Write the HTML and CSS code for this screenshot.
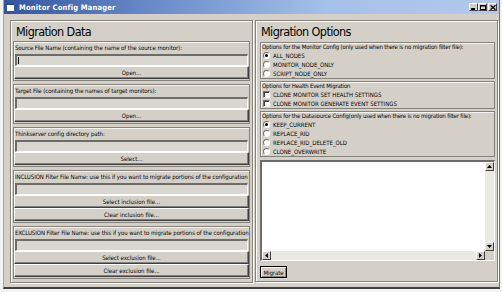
FILE: index.html
```html
<!DOCTYPE html>
<html>
<head>
<meta charset="utf-8">
<link rel="stylesheet" href="styles.css">
</head>
<body>
<div class="window">
  <div class="titlebar">
    <span class="app-icon"></span>
    <span class="title">Monitor Config Manager</span>
    <div class="caption-btns">
      <span class="cbtn"><svg width="6" height="5" viewBox="0 0 6 5"><rect x="0" y="3" width="4" height="2" fill="#000"/></svg></span>
      <span class="cbtn"><svg width="6" height="5" viewBox="0 0 6 5"><rect x="0.5" y="0.5" width="5" height="4" fill="none" stroke="#000"/><rect x="0" y="0" width="6" height="1.5" fill="#000"/></svg></span>
      <span class="cbtn close"><svg width="6" height="5" viewBox="0 0 6 5"><path d="M0.5 0.3 L5.5 4.7 M5.5 0.3 L0.5 4.7" stroke="#000" stroke-width="1.3"/></svg></span>
    </div>
  </div>
  <div class="client">
    <section class="panel panel-left">
      <h1 class="heading">Migration Data</h1>
      <div class="groups">
        <div class="group">
          <div class="label">Source File Name (containing the name of the source monitor):</div>
          <div class="field"><span class="caret"></span></div>
          <div class="btn">Open...</div>
        </div>
        <div class="group">
          <div class="label">Target File (containing the names of target monitors):</div>
          <div class="field"></div>
          <div class="btn">Open...</div>
        </div>
        <div class="group">
          <div class="label">Thinkserver config directory path:</div>
          <div class="field"></div>
          <div class="btn">Select...</div>
        </div>
        <div class="group">
          <div class="label">INCLUSION Filter File Name: use this if you want to migrate portions of the configuration</div>
          <div class="field"></div>
          <div class="btn">Select inclusion file...</div>
          <div class="btn">Clear inclusion file...</div>
        </div>
        <div class="group">
          <div class="label">EXCLUSION Filter File Name: use this if you want to migrate portions of the configuration</div>
          <div class="field"></div>
          <div class="btn">Select exclusion file...</div>
          <div class="btn">Clear exclusion file...</div>
        </div>
      </div>
    </section>
    <section class="panel panel-right">
      <h1 class="heading">Migration Options</h1>
      <div class="opt-groups">
        <div class="group opt-group">
          <div class="opt-label">Options for the Monitor Config (only used when there is no migration filter file):</div>
          <div class="opt"><span class="radio checked"></span>ALL_NODES</div>
          <div class="opt"><span class="radio"></span>MONITOR_NODE_ONLY</div>
          <div class="opt"><span class="radio"></span>SCRIPT_NODE_ONLY</div>
        </div>
        <div class="group opt-group">
          <div class="opt-label">Options for Health Event Migration</div>
          <div class="opt"><span class="check"></span>CLONE MONITOR SET HEALTH SETTINGS</div>
          <div class="opt"><span class="check"></span>CLONE MONITOR GENERATE EVENT SETTINGS</div>
        </div>
        <div class="group opt-group">
          <div class="opt-label">Options for the Datasource Config(only used when there is no migration filter file):</div>
          <div class="opt"><span class="radio checked"></span>KEEP_CURRENT</div>
          <div class="opt"><span class="radio"></span>REPLACE_RID</div>
          <div class="opt"><span class="radio"></span>REPLACE_RID_DELETE_OLD</div>
          <div class="opt"><span class="radio"></span>CLONE_OVERWRITE</div>
        </div>
      </div>
      <div class="log">
        <div class="log-text"></div>
        <div class="vscroll">
          <span class="sbtn"><svg width="5" height="3" viewBox="0 0 5 3"><path d="M2.5 0 L5 3 L0 3 Z" fill="#000"/></svg></span>
          <span class="track"></span>
          <span class="sbtn"><svg width="5" height="3" viewBox="0 0 5 3"><path d="M0 0 L5 0 L2.5 3 Z" fill="#000"/></svg></span>
        </div>
        <div class="hscroll">
          <span class="sbtn"><svg width="3" height="5" viewBox="0 0 3 5"><path d="M0 2.5 L3 0 L3 5 Z" fill="#000"/></svg></span>
          <span class="track"></span>
          <span class="sbtn"><svg width="3" height="5" viewBox="0 0 3 5"><path d="M3 2.5 L0 0 L0 5 Z" fill="#000"/></svg></span>
        </div>
        <div class="corner"></div>
      </div>
      <div class="actions">
        <span class="btn migrate">Migrate</span>
      </div>
    </section>
  </div>
</div>
</body>
</html>
```
FILE: styles.css
```css
html, body {
  margin: 0;
  padding: 0;
}
body {
  width: 502px;
  height: 292px;
  overflow: hidden;
  background: #f3f3f3;
  font-family: "DejaVu Sans Condensed", "Liberation Sans", sans-serif;
  font-size: 6px;
  color: #000;
}
.window {
  box-sizing: border-box;
  margin-left: 3px;
  width: 497px;
  height: 289px;
  border-left: 1px solid #8ea7d4;
  border-right: 1px solid #707070;
  border-bottom: 2px solid #404040;
  background: #d4d0c8;
  display: flex;
  flex-direction: column;
}
.titlebar {
  height: 14px;
  flex: none;
  display: flex;
  align-items: center;
  padding: 0 2px 0 2px;
  background: linear-gradient(90deg, #33559f 0%, #6a8bc9 30%, #a5c0e9 65%, #b2c9ec 100%);
  color: #fff;
}
.app-icon {
  width: 7px;
  height: 6px;
  background: #fff;
  border-top: 2px solid #2b4d9a;
  box-sizing: content-box;
  margin-left: 1px;
}
.title {
  margin-left: 5px;
  font-weight: bold;
  font-size: 7.5px;
  letter-spacing: 0.2px;
}
.caption-btns {
  margin-left: auto;
  display: flex;
  align-items: center;
}
.cbtn {
  box-sizing: border-box;
  width: 9px;
  height: 8px;
  background: #d4d0c8;
  border: 1px solid;
  border-color: #fff #404040 #404040 #fff;
  display: flex;
  align-items: center;
  justify-content: center;
}
.cbtn.close {
  margin-left: 1px;
}
.client {
  flex: 1;
  display: flex;
  gap: 2px;
  padding: 6px 0 0 6px;
}
.panel {
  box-sizing: border-box;
  width: 243px;
  border: 1px solid #85827c;
  box-shadow: inset 1px 1px 0 #fff, 1px 1px 0 #fff;
  display: flex;
  flex-direction: column;
}
.panel-left {
  height: 263px;
  padding: 0 2px 2px 2px;
}
.panel-right {
  height: 262px;
  padding: 0 2px 0 4px;
}
.heading {
  margin: 0;
  height: 20px;
  box-sizing: border-box;
  padding: 1px 0 0 3px;
  font-size: 12.5px;
  line-height: 19px;
  font-weight: normal;
  letter-spacing: -0.6px;
}
.panel-right .heading {
  padding-left: 1px;
  height: 21px;
}
.groups {
  display: flex;
  flex-direction: column;
  gap: 3px;
}
.group {
  border: 1px solid #85827c;
  box-shadow: inset 1px 1px 0 #f4f3f0;
  display: flex;
  flex-direction: column;
  padding-bottom: 1px;
}
.label {
  height: 12px;
  line-height: 12px;
  padding-left: 1px;
  white-space: nowrap;
  letter-spacing: -0.06px;
}
.field {
  box-sizing: border-box;
  height: 12px;
  margin: 0 1px;
  background: #dad7d0;
  border-style: solid;
  border-width: 2px 1px 1px 2px;
  border-color: #6e6c68 #fff #fff #6e6c68;
  display: flex;
  align-items: center;
}
.caret {
  width: 1px;
  height: 7px;
  background: #000;
  margin-left: 1px;
}
.btn {
  box-sizing: border-box;
  height: 13px;
  background: #d4d0c8;
  border: 1px solid;
  border-color: #fff #404040 #404040 #fff;
  box-shadow: inset -1px -1px 0 #808080;
  display: flex;
  align-items: center;
  justify-content: center;
  white-space: nowrap;
}
.opt-groups {
  display: flex;
  flex-direction: column;
  gap: 2px;
}
.opt-group {
  padding-bottom: 0;
}
.opt-label {
  height: 8px;
  line-height: 8px;
  padding-left: 1px;
  white-space: nowrap;
  letter-spacing: -0.16px;
}
.opt {
  height: 9px;
  display: flex;
  align-items: center;
  gap: 3px;
  padding-left: 2px;
  white-space: nowrap;
}
.radio {
  box-sizing: border-box;
  width: 7px;
  height: 7px;
  border-radius: 50%;
  border: 1px solid;
  border-color: #707070 #fff #fff #707070;
  background: #fff;
  display: flex;
  align-items: center;
  justify-content: center;
}
.radio.checked::after {
  content: "";
  width: 3px;
  height: 3px;
  border-radius: 50%;
  background: #000;
}
.check {
  box-sizing: border-box;
  width: 7px;
  height: 7px;
  border: 1px solid;
  border-color: #707070 #fff #fff #707070;
  box-shadow: inset 1px 1px 0 #404040;
  background: #fff;
}
.log {
  margin-top: 3px;
  height: 101px;
  box-sizing: border-box;
  border-style: solid;
  border-width: 2px 1px 1px 2px;
  border-color: #6e6c68 #fff #fff #6e6c68;
  background: #fff;
  display: grid;
  grid-template-columns: 1fr 9px;
  grid-template-rows: 1fr 9px;
}
.vscroll {
  display: flex;
  flex-direction: column;
}
.hscroll {
  display: flex;
}
.track {
  flex: 1;
  background: #ebe9e4;
}
.sbtn {
  box-sizing: border-box;
  width: 9px;
  height: 9px;
  flex: none;
  background: #d4d0c8;
  border: 1px solid;
  border-color: #fff #404040 #404040 #fff;
  display: flex;
  align-items: center;
  justify-content: center;
}
.corner {
  background: #d4d0c8;
}
.actions {
  margin-top: 5px;
  display: flex;
}
.btn.migrate {
  width: 27px;
  height: 12px;
  border: 1px solid #000;
  box-shadow: inset 1px 1px 0 #fff, inset -1px -1px 0 #808080;
  letter-spacing: -0.1px;
}
```
